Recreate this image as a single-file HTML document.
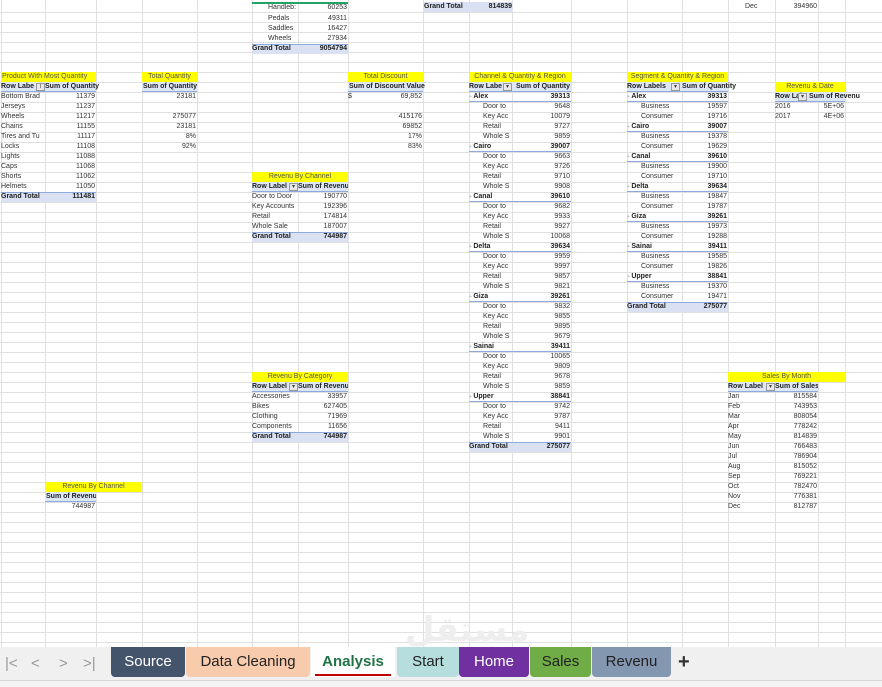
<!DOCTYPE html>
<html><head><meta charset="utf-8"><style>
*{margin:0;padding:0;box-sizing:border-box}
body{width:882px;height:687px;overflow:hidden;background:#fff;position:relative;font-family:"Liberation Sans",Arial,sans-serif;font-size:7px;color:#333}
#grid{position:absolute;left:0;top:0;width:882px;height:647px;background:repeating-linear-gradient(to bottom,transparent 0 9px,#e0e0e0 9px 10px);background-position:0 3px}
.vl{position:absolute;top:0;height:647px;width:1px;background:#e0e0e0}
.b{position:absolute}
.r{height:10px;line-height:10px;display:flex;white-space:nowrap}
.r span{overflow:hidden;display:block}
.r .l{width:var(--a);position:relative}
.r .v{width:var(--b);text-align:right;padding-right:1px}
.y{background:#ffff00;text-align:center;justify-content:center;display:block;color:#555}
.h{background:#dde6f3;font-weight:bold;box-shadow:inset 0 -1px #8ea9db;color:#222}
.g{background:#d9e1f2;font-weight:bold;box-shadow:inset 0 1px #8ea9db;color:#222}
.p{font-weight:bold;box-shadow:inset 0 -1px #8ea9db;color:#222}
.p .l::before{content:"+ ";color:#aaa;font-weight:normal;font-size:5px}
.i .l{padding-left:14px}
.r span.f{position:absolute;right:0;top:1px;width:9px;height:8px;border:1px solid #999;background:#e8e8e8;font-size:6px;line-height:6px;text-align:center;color:#444;font-weight:normal}
#tabs{position:absolute;left:0;top:647px;width:882px;height:33px;background:#f0f0f0}
.t{position:absolute;top:0;height:30px;line-height:30px;font-size:15px;text-align:center;border-radius:0 0 4px 4px;color:#222}
.nav{position:absolute;top:8px;font-size:15px;color:#999}
#st{position:absolute;left:0;top:680px;width:882px;height:7px;background:#f3f3f3;border-top:1px solid #d6d6d6}
</style></head><body>
<div id="grid"></div>
<div class="vl" style="left:1px"></div><div class="vl" style="left:45px"></div><div class="vl" style="left:96px"></div><div class="vl" style="left:142px"></div><div class="vl" style="left:197px"></div><div class="vl" style="left:252px"></div><div class="vl" style="left:298px"></div><div class="vl" style="left:348px"></div><div class="vl" style="left:423px"></div><div class="vl" style="left:469px"></div><div class="vl" style="left:512px"></div><div class="vl" style="left:571px"></div><div class="vl" style="left:627px"></div><div class="vl" style="left:682px"></div><div class="vl" style="left:728px"></div><div class="vl" style="left:775px"></div><div class="vl" style="left:818px"></div><div class="vl" style="left:845px"></div>

<div class="b" style="left:252px;top:2px;--a:48px;--b:48px;border-top:2px solid #21a366">
<div class="r i"><span class="l" style="padding-left:16px;height:8px;line-height:8px">Handleb:</span><span class="v" style="line-height:8px">60253</span></div>
<div class="r i"><span class="l" style="padding-left:16px">Pedals</span><span class="v">49311</span></div>
<div class="r i"><span class="l" style="padding-left:16px">Saddles</span><span class="v">16427</span></div>
<div class="r i"><span class="l" style="padding-left:16px">Wheels</span><span class="v">27934</span></div>
<div class="r g"><span class="l">Grand Total</span><span class="v">9054794</span></div>
</div>
<div class="b" style="left:424px;top:2px;--a:45px;--b:44px"><div class="r g" style="box-shadow:none"><span class="l">Grand Total</span><span class="v">814839</span></div></div>
<div class="b" style="left:745px;top:2px;--a:30px;--b:43px"><div class="r"><span class="l">Dec</span><span class="v">394960</span></div></div>

<div class="b" style="left:1px;top:72px;--a:44px;--b:51px">
<div class="r y" style="width:95px;text-align:left;padding-left:1px">Product With Most Quantity</div>
<div class="r h"><span class="l">Row Labe<span class="f">T</span></span><span class="v" style="overflow:visible">Sum of Quantity</span></div>
<div class="r"><span class="l">Bottom Brad</span><span class="v">11379</span></div>
<div class="r"><span class="l">Jerseys</span><span class="v">11237</span></div>
<div class="r"><span class="l">Wheels</span><span class="v">11217</span></div>
<div class="r"><span class="l">Chains</span><span class="v">11155</span></div>
<div class="r"><span class="l">Tires and Tu</span><span class="v">11117</span></div>
<div class="r"><span class="l">Locks</span><span class="v">11108</span></div>
<div class="r"><span class="l">Lights</span><span class="v">11088</span></div>
<div class="r"><span class="l">Caps</span><span class="v">11068</span></div>
<div class="r"><span class="l">Shorts</span><span class="v">11062</span></div>
<div class="r"><span class="l">Helmets</span><span class="v">11050</span></div>
<div class="r g"><span class="l">Grand Total</span><span class="v">111481</span></div>
</div>

<div class="b" style="left:142px;top:72px;--a:0px;--b:55px">
<div class="r y" style="width:55px">Total Quantity</div>
<div class="r h" style="width:55px"><span class="l" style="width:55px;padding-left:1px">Sum of Quantity</span></div>
<div class="r"><span class="v">23181</span></div>
<div class="r"><span class="v"></span></div>
<div class="r"><span class="v">275077</span></div>
<div class="r"><span class="v">23181</span></div>
<div class="r"><span class="v">8%</span></div>
<div class="r"><span class="v">92%</span></div>
</div>

<div class="b" style="left:348px;top:72px;--a:10px;--b:65px">
<div class="r y" style="width:75px">Total Discount</div>
<div class="r h" style="width:75px;overflow:visible"><span style="padding-left:1px;overflow:visible">Sum of Discount Value</span></div>
<div class="r"><span class="l">$</span><span class="v">69,852</span></div>
<div class="r"><span class="l"></span><span class="v"></span></div>
<div class="r"><span class="l"></span><span class="v">415176</span></div>
<div class="r"><span class="l"></span><span class="v">69852</span></div>
<div class="r"><span class="l"></span><span class="v">17%</span></div>
<div class="r"><span class="l"></span><span class="v">83%</span></div>
</div>

<div class="b" style="left:252px;top:172px;--a:46px;--b:50px">
<div class="r y" style="width:96px">Revenu By Channel</div>
<div class="r h"><span class="l">Row Label<span class="f">▾</span></span><span class="v" style="text-align:left">Sum of Revenu</span></div>
<div class="r"><span class="l" style="overflow:visible">Door to Door</span><span class="v">190770</span></div>
<div class="r"><span class="l" style="overflow:visible">Key Accounts</span><span class="v">192396</span></div>
<div class="r"><span class="l">Retail</span><span class="v">174814</span></div>
<div class="r"><span class="l" style="overflow:visible">Whole Sale</span><span class="v">187007</span></div>
<div class="r g"><span class="l" style="overflow:visible">Grand Total</span><span class="v">744987</span></div>
</div>

<div class="b" style="left:252px;top:372px;--a:46px;--b:50px">
<div class="r y" style="width:96px">Revenu By Category</div>
<div class="r h"><span class="l">Row Label<span class="f">▾</span></span><span class="v" style="text-align:left">Sum of Revenu</span></div>
<div class="r"><span class="l">Accessories</span><span class="v">33957</span></div>
<div class="r"><span class="l">Bikes</span><span class="v">627405</span></div>
<div class="r"><span class="l">Clothing</span><span class="v">71969</span></div>
<div class="r"><span class="l" style="overflow:visible">Components</span><span class="v">11656</span></div>
<div class="r g"><span class="l" style="overflow:visible">Grand Total</span><span class="v">744987</span></div>
</div>

<div class="b" style="left:469px;top:72px;--a:43px;--b:59px">
<div class="r y" style="width:102px">Channel &amp; Quantity &amp; Region</div>
<div class="r h"><span class="l">Row Labe<span class="f">▾</span></span><span class="v">Sum of Quantity</span></div>
<div class="r p"><span class="l">Alex</span><span class="v">39313</span></div>
<div class="r i"><span class="l">Door to</span><span class="v">9648</span></div><div class="r i"><span class="l">Key Acc</span><span class="v">10079</span></div><div class="r i"><span class="l">Retail</span><span class="v">9727</span></div><div class="r i"><span class="l">Whole S</span><span class="v">9859</span></div>
<div class="r p"><span class="l">Cairo</span><span class="v">39007</span></div>
<div class="r i"><span class="l">Door to</span><span class="v">9663</span></div><div class="r i"><span class="l">Key Acc</span><span class="v">9726</span></div><div class="r i"><span class="l">Retail</span><span class="v">9710</span></div><div class="r i"><span class="l">Whole S</span><span class="v">9908</span></div>
<div class="r p"><span class="l">Canal</span><span class="v">39610</span></div>
<div class="r i"><span class="l">Door to</span><span class="v">9682</span></div><div class="r i"><span class="l">Key Acc</span><span class="v">9933</span></div><div class="r i"><span class="l">Retail</span><span class="v">9927</span></div><div class="r i"><span class="l">Whole S</span><span class="v">10068</span></div>
<div class="r p"><span class="l">Delta</span><span class="v">39634</span></div>
<div class="r i"><span class="l">Door to</span><span class="v">9959</span></div><div class="r i"><span class="l">Key Acc</span><span class="v">9997</span></div><div class="r i"><span class="l">Retail</span><span class="v">9857</span></div><div class="r i"><span class="l">Whole S</span><span class="v">9821</span></div>
<div class="r p"><span class="l">Giza</span><span class="v">39261</span></div>
<div class="r i"><span class="l">Door to</span><span class="v">9832</span></div><div class="r i"><span class="l">Key Acc</span><span class="v">9855</span></div><div class="r i"><span class="l">Retail</span><span class="v">9895</span></div><div class="r i"><span class="l">Whole S</span><span class="v">9679</span></div>
<div class="r p"><span class="l">Sainai</span><span class="v">39411</span></div>
<div class="r i"><span class="l">Door to</span><span class="v">10065</span></div><div class="r i"><span class="l">Key Acc</span><span class="v">9809</span></div><div class="r i"><span class="l">Retail</span><span class="v">9678</span></div><div class="r i"><span class="l">Whole S</span><span class="v">9859</span></div>
<div class="r p"><span class="l">Upper</span><span class="v">38841</span></div>
<div class="r i"><span class="l">Door to</span><span class="v">9742</span></div><div class="r i"><span class="l">Key Acc</span><span class="v">9787</span></div><div class="r i"><span class="l">Retail</span><span class="v">9411</span></div><div class="r i"><span class="l">Whole S</span><span class="v">9901</span></div>
<div class="r g"><span class="l" style="overflow:visible">Grand Total</span><span class="v">275077</span></div>
</div>

<div class="b" style="left:627px;top:72px;--a:55px;--b:46px">
<div class="r y" style="width:101px">Segment &amp; Quantity &amp; Region</div>
<div class="r h" style="overflow:visible"><span class="l">Row Labels<span class="f" style="right:2px">▾</span></span><span class="v" style="text-align:left;overflow:visible">Sum of Quantity</span></div>
<div class="r p"><span class="l">Alex</span><span class="v">39313</span></div>
<div class="r i"><span class="l">Business</span><span class="v">19597</span></div><div class="r i"><span class="l">Consumer</span><span class="v">19716</span></div>
<div class="r p"><span class="l">Cairo</span><span class="v">39007</span></div>
<div class="r i"><span class="l">Business</span><span class="v">19378</span></div><div class="r i"><span class="l">Consumer</span><span class="v">19629</span></div>
<div class="r p"><span class="l">Canal</span><span class="v">39610</span></div>
<div class="r i"><span class="l">Business</span><span class="v">19900</span></div><div class="r i"><span class="l">Consumer</span><span class="v">19710</span></div>
<div class="r p"><span class="l">Delta</span><span class="v">39634</span></div>
<div class="r i"><span class="l">Business</span><span class="v">19847</span></div><div class="r i"><span class="l">Consumer</span><span class="v">19787</span></div>
<div class="r p"><span class="l">Giza</span><span class="v">39261</span></div>
<div class="r i"><span class="l">Business</span><span class="v">19973</span></div><div class="r i"><span class="l">Consumer</span><span class="v">19288</span></div>
<div class="r p"><span class="l">Sainai</span><span class="v">39411</span></div>
<div class="r i"><span class="l">Business</span><span class="v">19585</span></div><div class="r i"><span class="l">Consumer</span><span class="v">19826</span></div>
<div class="r p"><span class="l">Upper</span><span class="v">38841</span></div>
<div class="r i"><span class="l">Business</span><span class="v">19370</span></div><div class="r i"><span class="l">Consumer</span><span class="v">19471</span></div>
<div class="r g"><span class="l">Grand Total</span><span class="v">275077</span></div>
</div>

<div class="b" style="left:775px;top:82px;--a:32px;--b:38px">
<div class="r y" style="width:70px">Revenu &amp; Date</div>
<div class="r h" style="overflow:visible;width:70px"><span class="l">Row Labe<span class="f">▾</span></span><span class="v" style="text-align:left;overflow:visible;padding-left:2px">Sum of Revenu</span></div>
<div class="r"><span class="l">2016</span><span class="v">5E+06</span></div>
<div class="r"><span class="l">2017</span><span class="v">4E+06</span></div>
</div>

<div class="b" style="left:728px;top:372px;--a:47px;--b:43px">
<div class="r y" style="width:117px">Sales By Month</div>
<div class="r h" style="width:90px"><span class="l">Row Label<span class="f">▾</span></span><span class="v" style="text-align:left">Sum of Sales</span></div>
<div class="r"><span class="l">Jan</span><span class="v">815584</span></div>
<div class="r"><span class="l">Feb</span><span class="v">743953</span></div>
<div class="r"><span class="l">Mar</span><span class="v">808054</span></div>
<div class="r"><span class="l">Apr</span><span class="v">778242</span></div>
<div class="r"><span class="l">May</span><span class="v">814839</span></div>
<div class="r"><span class="l">Jun</span><span class="v">766483</span></div>
<div class="r"><span class="l">Jul</span><span class="v">786904</span></div>
<div class="r"><span class="l">Aug</span><span class="v">815052</span></div>
<div class="r"><span class="l">Sep</span><span class="v">769221</span></div>
<div class="r"><span class="l">Oct</span><span class="v">782470</span></div>
<div class="r"><span class="l">Nov</span><span class="v">776381</span></div>
<div class="r"><span class="l">Dec</span><span class="v">812787</span></div>
</div>

<div class="b" style="left:45px;top:482px;--a:0px;--b:51px">
<div class="r y" style="width:97px">Revenu By Channel</div>
<div class="r h" style="width:51px"><span style="padding-left:1px">Sum of Revenu</span></div>
<div class="r"><span class="v">744987</span></div>
</div>

<div style="position:absolute;left:405px;top:610px;font-size:34px;color:#eeeeee;font-family:'DejaVu Sans',sans-serif;font-weight:bold">مستقل</div>

<div id="tabs">
<span class="nav" style="left:5px">|&lt;</span><span class="nav" style="left:31px">&lt;</span><span class="nav" style="left:59px">&gt;</span><span class="nav" style="left:83px">&gt;|</span>
<div class="t" style="left:111px;width:74px;background:#44546a;color:#fff">Source</div>
<div class="t" style="left:186px;width:124px;background:#f8cbad">Data Cleaning</div>
<div class="t" style="left:311px;width:84px;background:#fff;color:#217346;font-weight:bold;border-radius:0">Analysis<div style="position:absolute;left:4px;right:4px;bottom:1px;height:2px;background:#c00000"></div></div>
<div class="t" style="left:397px;width:62px;background:#b7dede">Start</div>
<div class="t" style="left:459px;width:70px;background:#7030a0;color:#fff">Home</div>
<div class="t" style="left:530px;width:61px;background:#70ad47">Sales</div>
<div class="t" style="left:592px;width:79px;background:#8497b0">Revenu</div>
<span style="position:absolute;left:678px;top:4px;font-size:20px;font-weight:bold;color:#333">+</span>
</div>
<div id="st"></div>
</body></html>
